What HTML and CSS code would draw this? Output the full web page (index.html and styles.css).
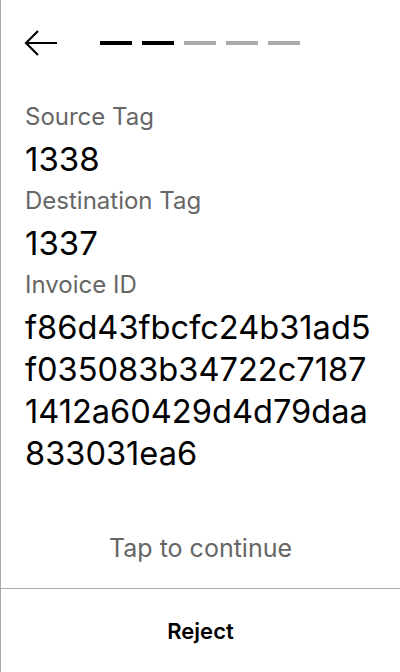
FILE: index.html
```html
<!DOCTYPE html>
<html>
<head>
<meta charset="utf-8">
<link rel="stylesheet" href="styles.css">
</head>
<body>
<div class="screen">
  <header class="top">
    <svg class="back" width="34" height="28" viewBox="0 0 34 28" aria-label="Back">
      <path d="M33 14H2M14 2L2 14L14 26" fill="none" stroke="#000" stroke-width="2.2"/>
    </svg>
    <div class="steps">
      <span class="step done"></span>
      <span class="step done"></span>
      <span class="step"></span>
      <span class="step"></span>
      <span class="step"></span>
    </div>
  </header>
  <main class="fields">
    <div class="label">Source Tag</div>
    <div class="value">1338</div>
    <div class="label">Destination Tag</div>
    <div class="value">1337</div>
    <div class="label">Invoice ID</div>
    <div class="value hex">f86d43fbcfc24b31ad5<br>f035083b34722c7187<br>1412a60429d4d79daa<br>833031ea6</div>
  </main>
  <div class="tap">Tap to continue</div>
  <footer class="reject">Reject</footer>
</div>
</body>
</html>
```
FILE: styles.css
```css
html, body {
  margin: 0;
  padding: 0;
  background: #fff;
}
body {
  font-family: Inter, "Noto Sans", sans-serif;
  color: #000;
}
.screen {
  width: 400px;
  height: 672px;
  box-sizing: border-box;
  border-left: 1px solid #aaa;
  display: flex;
  flex-direction: column;
}
.top {
  display: flex;
  align-items: center;
  height: 86px;
  padding-left: 23px;
  gap: 42px;
  margin-bottom: 10px;
}
.back {
  display: block;
}
.steps {
  display: flex;
  gap: 10px;
}
.step {
  width: 32px;
  height: 4px;
  background: #aaa;
}
.step.done {
  background: #000;
}
.fields {
  padding: 0 24px;
  flex: 1;
}
.label {
  font-size: 24px;
  line-height: 42px;
  color: #666;
}
.value {
  font-size: 33px;
  line-height: 42px;
}
.hex {
  font-size: 32.6px;
  white-space: nowrap;
}
.tap {
  text-align: center;
  font-size: 25px;
  color: #666;
  line-height: 42px;
  padding-bottom: 19px;
}
.reject {
  border-top: 1px solid #aaa;
  height: 83px;
  display: flex;
  align-items: center;
  justify-content: center;
  font-size: 22px;
  font-weight: 600;
}
```
